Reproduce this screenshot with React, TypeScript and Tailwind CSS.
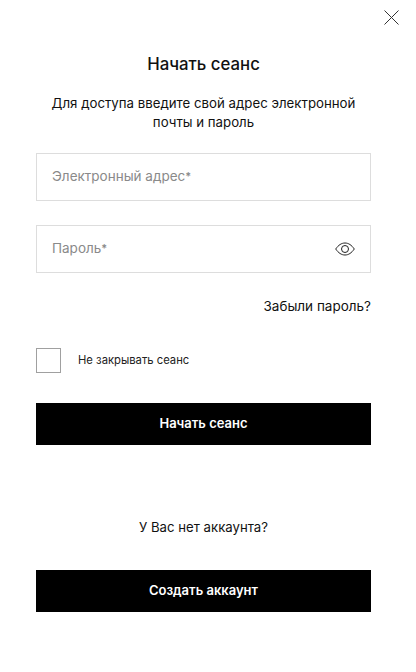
function Required() {
  return <span className="relative top-[-1px] text-[11px] font-semibold">*</span>;
}

export default function App() {
  return (
    <div className="relative h-[672px] w-[416px] bg-white font-['Inter','Liberation_Sans',sans-serif] text-[#111]">
      {/* close */}
      <button className="absolute left-[384px] top-[10px]">
        <svg width="15" height="15" viewBox="0 0 15 15" fill="none" stroke="#333" strokeWidth="1">
          <path d="M0.5 0.5L14.5 14.5M14.5 0.5L0.5 14.5" />
        </svg>
      </button>

      <div className="flex flex-col pl-9 pr-[45px] pt-[53px]">
        <h1 className="text-center text-[16.8px] leading-[22px] font-medium">Начать сеанс</h1>
        <p className="mt-[19px] text-center text-[13.25px] leading-[19px]">
          Для доступа введите свой адрес электронной
          <br />
          почты и пароль
        </p>

        <div className="mt-[21px] flex h-[48px] items-center border border-[#ddd] px-[15px] pb-[1px] text-[13.5px] text-[#8a8a8a]">
          <span>
            Электронный адрес
            <Required />
          </span>
        </div>

        <div className="mt-[24px] flex h-[48px] items-center justify-between border border-[#ddd] px-[15px] text-[13.5px] text-[#8a8a8a]">
          <span className="pb-[1px]">
            Пароль
            <Required />
          </span>
          <svg width="20" height="14" viewBox="0 0 20 14" fill="none" stroke="#222" strokeWidth="1">
            <path d="M0.7 7C3.5 3 6.500 1 10 1s6.500 2 9.300 6C16.500 11 13.500 13 10 13S3.500 11 0.700 7z" />
            <circle cx="10" cy="7" r="3.500" />
          </svg>
        </div>

        <a className="mt-[24px] self-end text-[13.500px] leading-[18px]">Забыли пароль?</a>

        <div className="mt-[33px] flex items-center gap-[17px]">
          <div className="h-[25px] w-[25px] border border-[#a0a0a0]" />
          <span className="text-[11.250px] text-[#222]">Не закрывать сеанс</span>
        </div>

        <button className="mt-[30px] h-[42px] bg-black text-[13px] font-semibold text-white">Начать сеанс</button>

        <p className="mt-[73px] text-center text-[13.200px] leading-[18px]">У Вас нет аккаунта?</p>

        <button className="mt-[34px] h-[42px] bg-black text-[13px] font-semibold text-white">Создать аккаунт</button>
      </div>
    </div>
  );
}
